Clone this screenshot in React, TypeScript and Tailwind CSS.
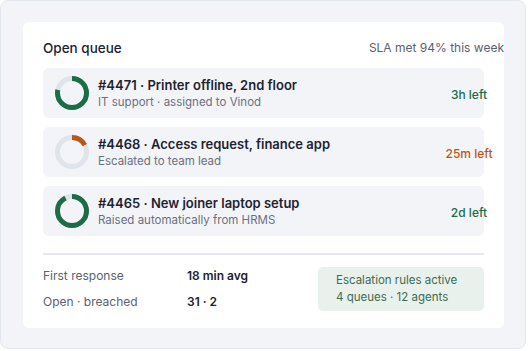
const tickets = [
  { id: '#4471', title: 'Printer offline, 2nd floor', sub: 'IT support · assigned to Vinod', left: '3h left', pct: 0.78, tone: 'green' },
  { id: '#4468', title: 'Access request, finance app', sub: 'Escalated to team lead', left: '25m left', pct: 0.17, tone: 'orange' },
  { id: '#4465', title: 'New joiner laptop setup', sub: 'Raised automatically from HRMS', left: '2d left', pct: 0.92, tone: 'green' },
];

function Ring({ pct, color }: { pct: number; color: string }) {
  const r = 14.5;
  const c = 2 * Math.PI * r;
  return (
    <svg width="34" height="34" viewBox="0 0 34 34" className="shrink-0">
      <circle cx="17" cy="17" r={r} fill="none" stroke="#dfe3ea" strokeWidth="5" />
      <circle
        cx="17"
        cy="17"
        r={r}
        fill="none"
        stroke={color}
        strokeWidth="5"
        strokeDasharray={`${c * pct} ${c}`}
        transform="rotate(-90 17 17)"
      />
    </svg>
  );
}

export default function App() {
  return (
    <div className="w-[526px] h-[349px] bg-[#f2f4f8] border border-[#e3e7ee] rounded-lg pt-[21px] pl-[22px] font-['Inter',sans-serif]">
      <div className="w-[481px] h-[306px] bg-white rounded-md pt-4 px-5">
        {/* Header */}
        <div className="flex items-center justify-between h-5 -mr-5">
          <h2 className="text-[13.5px] font-medium text-[#1d2330]">Open queue</h2>
          <span className="text-[12px] text-[#5b6170]">SLA met 94% this week</span>
        </div>

        {/* Tickets */}
        <div className="mt-[10px] flex flex-col gap-[9px]">
          {tickets.map((t) => {
            const color = t.tone === 'green' ? '#1e6b47' : '#b9561c';
            return (
              <div key={t.id} className="h-[50px] bg-[#f3f4f8] rounded-md flex items-center pl-3 gap-[9px]">
                <Ring pct={t.pct} color={color} />
                <div className="flex flex-col min-w-0">
                  <span className="text-[13px] leading-[18px] font-semibold text-[#1d2330] whitespace-nowrap">
                    {t.id} · {t.title}
                  </span>
                  <span className="text-[11.5px] leading-4 text-[#6b7080] whitespace-nowrap">{t.sub}</span>
                </div>
                <span
                  className={`ml-auto -mr-[10px] mt-1 w-[50px] text-center text-[12px] font-medium whitespace-nowrap ${
                    t.tone === 'green' ? 'text-[#1e6b47]' : 'text-[#b9561c]'
                  }`}
                >
                  {t.left}
                </span>
              </div>
            );
          })}
        </div>

        <div className="mt-[17px] h-[2px] bg-[#e6e9f0]" />

        {/* Footer */}
        <div className="mt-3 flex justify-between">
          <div className="flex flex-col gap-[6px] -mt-px text-[12px] leading-5">
            <div className="flex">
              <span className="w-[144px] text-[#5b6170]">First response</span>
              <span className="font-semibold text-[#1d2330]">18 min avg</span>
            </div>
            <div className="flex">
              <span className="w-[144px] text-[#5b6170]">Open · breached</span>
              <span className="font-semibold text-[#1d2330]">31 · 2</span>
            </div>
          </div>
          <div className="w-[166px] h-[44px] bg-[#e8f1ec] rounded-[5px] pl-[18px] flex flex-col justify-center text-[11.5px] leading-[17px] text-[#3f6b55]">
            <span>Escalation rules active</span>
            <span>4 queues · 12 agents</span>
          </div>
        </div>
      </div>
    </div>
  );
}
